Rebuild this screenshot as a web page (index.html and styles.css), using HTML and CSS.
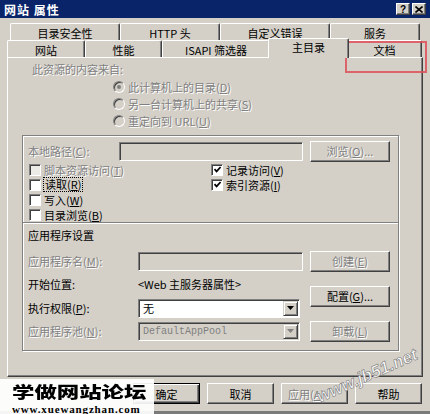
FILE: index.html
```html
<!DOCTYPE html>
<html lang="zh-CN">
<head>
<meta charset="utf-8">
<title>网站 属性</title>
<link rel="stylesheet" href="styles.css">
</head>
<body>
<div class="window">
  <div class="titlebar">
    <span class="title">网站 属性</span>
    <div class="caption-btns">
      <span class="cbtn">?</span>
      <span class="cbtn"><svg width="8" height="7" viewBox="0 0 8 7"><path d="M0.5 0.5 L7.5 6.5 M7.5 0.5 L0.5 6.5" stroke="#000" stroke-width="1.6" fill="none"/></svg></span>
    </div>
  </div>

  <div class="tabs">
    <div class="tabrow back">
      <div class="tab" style="width:110px">目录安全性</div>
      <div class="tab" style="width:100px">HTTP 头</div>
      <div class="tab" style="width:110px">自定义错误</div>
      <div class="tab" style="width:90px">服务</div>
    </div>
    <div class="tabrow front">
      <div class="tab" style="width:78px">网站</div>
      <div class="tab" style="width:77px">性能</div>
      <div class="tab" style="width:108px">ISAPI 筛选器</div>
      <div class="tab sel" style="width:81px">主目录</div>
      <div class="tab" style="width:75px">文档</div>
    </div>
  </div>

  <div class="panel">
    <div class="src-label dis">此资源的内容来自:</div>
    <div class="radios">
      <div class="radio-row dis"><span class="radio on"></span>此计算机上的目录(<u>D</u>)</div>
      <div class="radio-row dis"><span class="radio"></span>另一台计算机上的共享(<u>S</u>)</div>
      <div class="radio-row dis"><span class="radio"></span>重定向到 URL(<u>U</u>)</div>
    </div>

    <div class="frame">
      <div class="path-row">
        <span class="lbl dis">本地路径(<u>C</u>):</span>
        <span class="field off"></span>
        <span class="btn dis">浏览(<u>O</u>)...</span>
      </div>

      <div class="checks">
        <div class="chk dis"><span class="box off"></span>脚本资源访问(<u>T</u>)</div>
        <div class="chk"><span class="box"><svg width="9" height="9" viewBox="0 0 9 9"><path d="M1.5 4.2 L3.6 6.4 L7.6 2" stroke="#000" stroke-width="1.7" fill="none"/></svg></span>记录访问(<u>V</u>)</div>
        <div class="chk"><span class="box"></span><span class="focus">读取(<u>R</u>)</span></div>
        <div class="chk"><span class="box"><svg width="9" height="9" viewBox="0 0 9 9"><path d="M1.5 4.2 L3.6 6.4 L7.6 2" stroke="#000" stroke-width="1.7" fill="none"/></svg></span>索引资源(<u>I</u>)</div>
        <div class="chk"><span class="box"></span>写入(<u>W</u>)</div>
        <div></div>
        <div class="chk"><span class="box"></span>目录浏览(<u>B</u>)</div>
      </div>

      <div class="sep"></div>
      <div class="sect-title">应用程序设置</div>

      <div class="app-grid">
        <span class="lbl dis">应用程序名(<u>M</u>):</span>
        <span class="field off"></span>
        <span class="btn dis">创建(<u>E</u>)</span>

        <span class="lbl">开始位置:</span>
        <span class="lbl">&lt;Web 主服务器属性&gt;</span>
        <span class="btn cfg">配置(<u>G</u>)...</span>

        <span class="lbl">执行权限(<u>P</u>):</span>
        <span class="select"><span class="val">无</span><span class="dd"><svg width="7" height="4" viewBox="0 0 7 4"><path d="M0 0 H7 L3.5 4 Z" fill="#000"/></svg></span></span>

        <span class="lbl dis">应用程序池(<u>N</u>):</span>
        <span class="select off"><span class="val mono">DefaultAppPool</span><span class="dd"><svg width="7" height="4" viewBox="0 0 7 4"><path d="M0 0 H7 L3.5 4 Z" fill="#808080"/></svg></span></span>
        <span class="btn dis">卸载(<u>L</u>)</span>
      </div>
    </div>
  </div>

  <div class="buttons">
    <span class="btn dlg default">确定</span>
    <span class="btn dlg">取消</span>
    <span class="btn dlg dis apply">应用(<u>A</u>)</span>
    <span class="btn dlg">帮助</span>
  </div>

  <div class="annot"></div>
  <div class="wm-box">
    <div class="wm-cn">学做网站论坛</div>
    <div class="wm-url">www.xuewangzhan.com</div>
  </div>
  <div class="wm-jb">www.jb51.net</div>
</div>
</body>
</html>
```

FILE: styles.css
```css
html, body {
  margin: 0;
  padding: 0;
}
body {
  width: 430px;
  height: 414px;
  overflow: hidden;
  background: #d4d0c8;
  font-family: "Noto Sans CJK SC", "Noto Sans", sans-serif;
  font-size: 11px;
  color: #000;
}
u { text-decoration: underline; }

.window {
  position: relative;
  height: 414px;
  box-sizing: border-box;
  border-bottom: 3px solid #7a7a7a;
  display: flex;
  flex-direction: column;
}

/* title bar */
.titlebar {
  height: 18px;
  flex: none;
  background: #0a246a;
  display: flex;
  align-items: center;
  justify-content: space-between;
  padding: 0 4px 0 4px;
  color: #fff;
}
.title {
  font-weight: bold;
  font-size: 12px;
  letter-spacing: 1px;
}
.caption-btns {
  display: flex;
  gap: 2px;
}
.cbtn {
  width: 14px;
  height: 12px;
  box-sizing: border-box;
  background: #d4d0c8;
  border: 1px solid;
  border-color: #fff #404040 #404040 #fff;
  box-shadow: inset -1px -1px #808080;
  display: flex;
  align-items: center;
  justify-content: center;
  color: #000;
  font: bold 10px "Liberation Sans", sans-serif;
}

/* tabs */
.tabs {
  margin-top: 5px;
  flex: none;
}
.tabrow {
  display: flex;
  height: 17px;
}
.tabrow.back { padding-left: 10px; }
.tabrow.front { padding-left: 7px; }
.tab {
  box-sizing: border-box;
  height: 17px;
  flex: none;
  border-top: 1px solid #fff;
  border-left: 1px solid #fff;
  border-right: 1px solid #404040;
  box-shadow: inset -1px 0 #808080;
  border-radius: 2px 2px 0 0;
  display: flex;
  align-items: center;
  justify-content: center;
  background: #d4d0c8;
  padding-top: 2px;
}
.tab.sel {
  height: 20px;
  margin: -2px -2px -1px -2px;
  position: relative;
  z-index: 2;
  padding: 0 0 4px 0;
}

/* main panel */
.panel {
  box-sizing: border-box;
  height: 320px;
  margin: 0 7px 0 7px;
  flex: none;
  border: 1px solid;
  border-color: #fff #404040 #404040 #fff;
  box-shadow: inset -1px -1px #808080;
  padding-top: 3px;
}
.dis {
  color: #808080;
  text-shadow: 1px 1px 0 #fff;
}
.src-label {
  height: 17px;
  line-height: 17px;
  padding-left: 24px;
}
.radios {
  padding-left: 105px;
}
.radio-row {
  height: 17px;
  display: flex;
  align-items: center;
}
.radio {
  width: 12px;
  height: 12px;
  box-sizing: border-box;
  border-radius: 50%;
  border: 1px solid;
  border-color: #808080 #fff #fff #808080;
  box-shadow: inset 1px 1px #404040;
  background: #d4d0c8;
  margin-right: 3px;
  display: flex;
  align-items: center;
  justify-content: center;
}
.radio.on::after {
  content: "";
  width: 4px;
  height: 4px;
  border-radius: 50%;
  background: #808080;
}

/* group frame */
.frame {
  margin: 6px 0 0 14px;
  width: 377px;
  box-sizing: border-box;
  border: 1px solid #808080;
  box-shadow: inset 1px 1px #fff, 1px 1px #fff;
}
.path-row {
  display: grid;
  grid-template-columns: 84px 184px 80px;
  column-gap: 7px;
  align-items: center;
  height: 22px;
  margin-top: 4px;
  padding-left: 5px;
}
.lbl {
  white-space: nowrap;
}
.field {
  box-sizing: border-box;
  height: 19px;
  border: 1px solid;
  border-color: #808080 #fff #fff #808080;
  box-shadow: inset 1px 1px #404040, inset -1px -1px #d4d0c8;
  background: #fff;
}
.field.off { background: #d4d0c8; }

.btn {
  box-sizing: border-box;
  height: 21px;
  background: #d4d0c8;
  border: 1px solid;
  border-color: #fff #404040 #404040 #fff;
  box-shadow: inset -1px -1px #808080;
  display: flex;
  align-items: center;
  justify-content: center;
  white-space: nowrap;
}

.checks {
  display: grid;
  grid-template-columns: 182px auto;
  grid-auto-rows: 15px;
  padding-left: 6px;
}
.chk {
  display: flex;
  align-items: center;
  white-space: nowrap;
}
.box {
  width: 12px;
  height: 12px;
  flex: none;
  box-sizing: border-box;
  border: 1px solid;
  border-color: #808080 #fff #fff #808080;
  box-shadow: inset 1px 1px #404040;
  background: #fff;
  margin-right: 3px;
  display: flex;
  align-items: center;
  justify-content: center;
}
.box.off { background: #ecebe6; }
.focus {
  outline: 1px dotted #000;
  outline-offset: 0;
  padding: 0 1px;
  line-height: 13px;
}

.sep {
  height: 0;
  border-top: 1px solid #808080;
  border-bottom: 1px solid #fff;
}
.sect-title {
  margin-top: 3px;
  height: 17px;
  line-height: 17px;
  padding-left: 5px;
}

.app-grid {
  display: grid;
  grid-template-columns: 103px 165px 80px;
  grid-template-rows: 22px 24px 24px 22px;
  column-gap: 7px;
  align-items: center;
  padding: 6px 8px 8px 5px;
}
.app-grid .cfg {
  grid-column: 3;
  grid-row: 2 / span 2;
}
.select {
  box-sizing: border-box;
  width: 162px;
  height: 19px;
  display: flex;
  align-items: stretch;
  border: 1px solid;
  border-color: #808080 #fff #fff #808080;
  box-shadow: inset 1px 1px #404040;
  background: #fff;
  padding: 1px 1px 1px 1px;
}
.select.off { background: #d4d0c8; }
.select .val {
  flex: 1;
  padding-left: 3px;
  line-height: 15px;
}
.select.off .val {
  color: #808080;
}
.mono {
  font-family: "Liberation Mono", monospace;
  font-size: 10px;
}
.select .dd {
  width: 15px;
  box-sizing: border-box;
  background: #d4d0c8;
  border: 1px solid;
  border-color: #d4d0c8 #404040 #404040 #d4d0c8;
  box-shadow: inset 1px 1px #fff, inset -1px -1px #808080;
  display: flex;
  align-items: center;
  justify-content: center;
}

/* dialog buttons */
.buttons {
  display: flex;
  justify-content: flex-end;
  gap: 7px;
  padding-right: 8px;
  margin-top: 6px;
}
.btn.dlg {
  width: 67px;
  height: 21px;
}
.btn.apply {
  justify-content: flex-start;
  padding-left: 6px;
}
.btn.default {
  border: 1px solid #000;
  box-shadow: inset 1px 1px #fff, inset -1px -1px #404040, inset -2px -2px #808080;
}

/* overlays */
.annot {
  position: absolute;
  left: 345px;
  top: 41px;
  width: 82px;
  height: 32px;
  box-sizing: border-box;
  border: 2px solid rgba(222, 80, 90, 0.85);
}
.wm-box {
  position: absolute;
  left: 0;
  top: 379px;
  width: 154px;
  height: 36px;
  background: rgba(255, 255, 255, 0.92);
  padding: 0 0 0 12px;
  box-sizing: border-box;
}
.wm-cn {
  font-size: 16px;
  font-weight: 900;
  transform: scaleX(1.4);
  transform-origin: left center;
  white-space: nowrap;
}
.wm-url {
  font-family: "Liberation Serif", serif;
  font-weight: bold;
  font-size: 11px;
  white-space: nowrap;
  letter-spacing: 0.85px;
}
.wm-jb {
  position: absolute;
  left: 318px;
  top: 388px;
  font-family: "Liberation Sans", sans-serif;
  font-style: italic;
  font-weight: bold;
  font-size: 17px;
  color: rgba(255, 255, 255, 0.9);
  -webkit-text-stroke: 0.6px #7a7a7a;
  transform: rotate(-24deg);
  transform-origin: left center;
  white-space: nowrap;
}
```
